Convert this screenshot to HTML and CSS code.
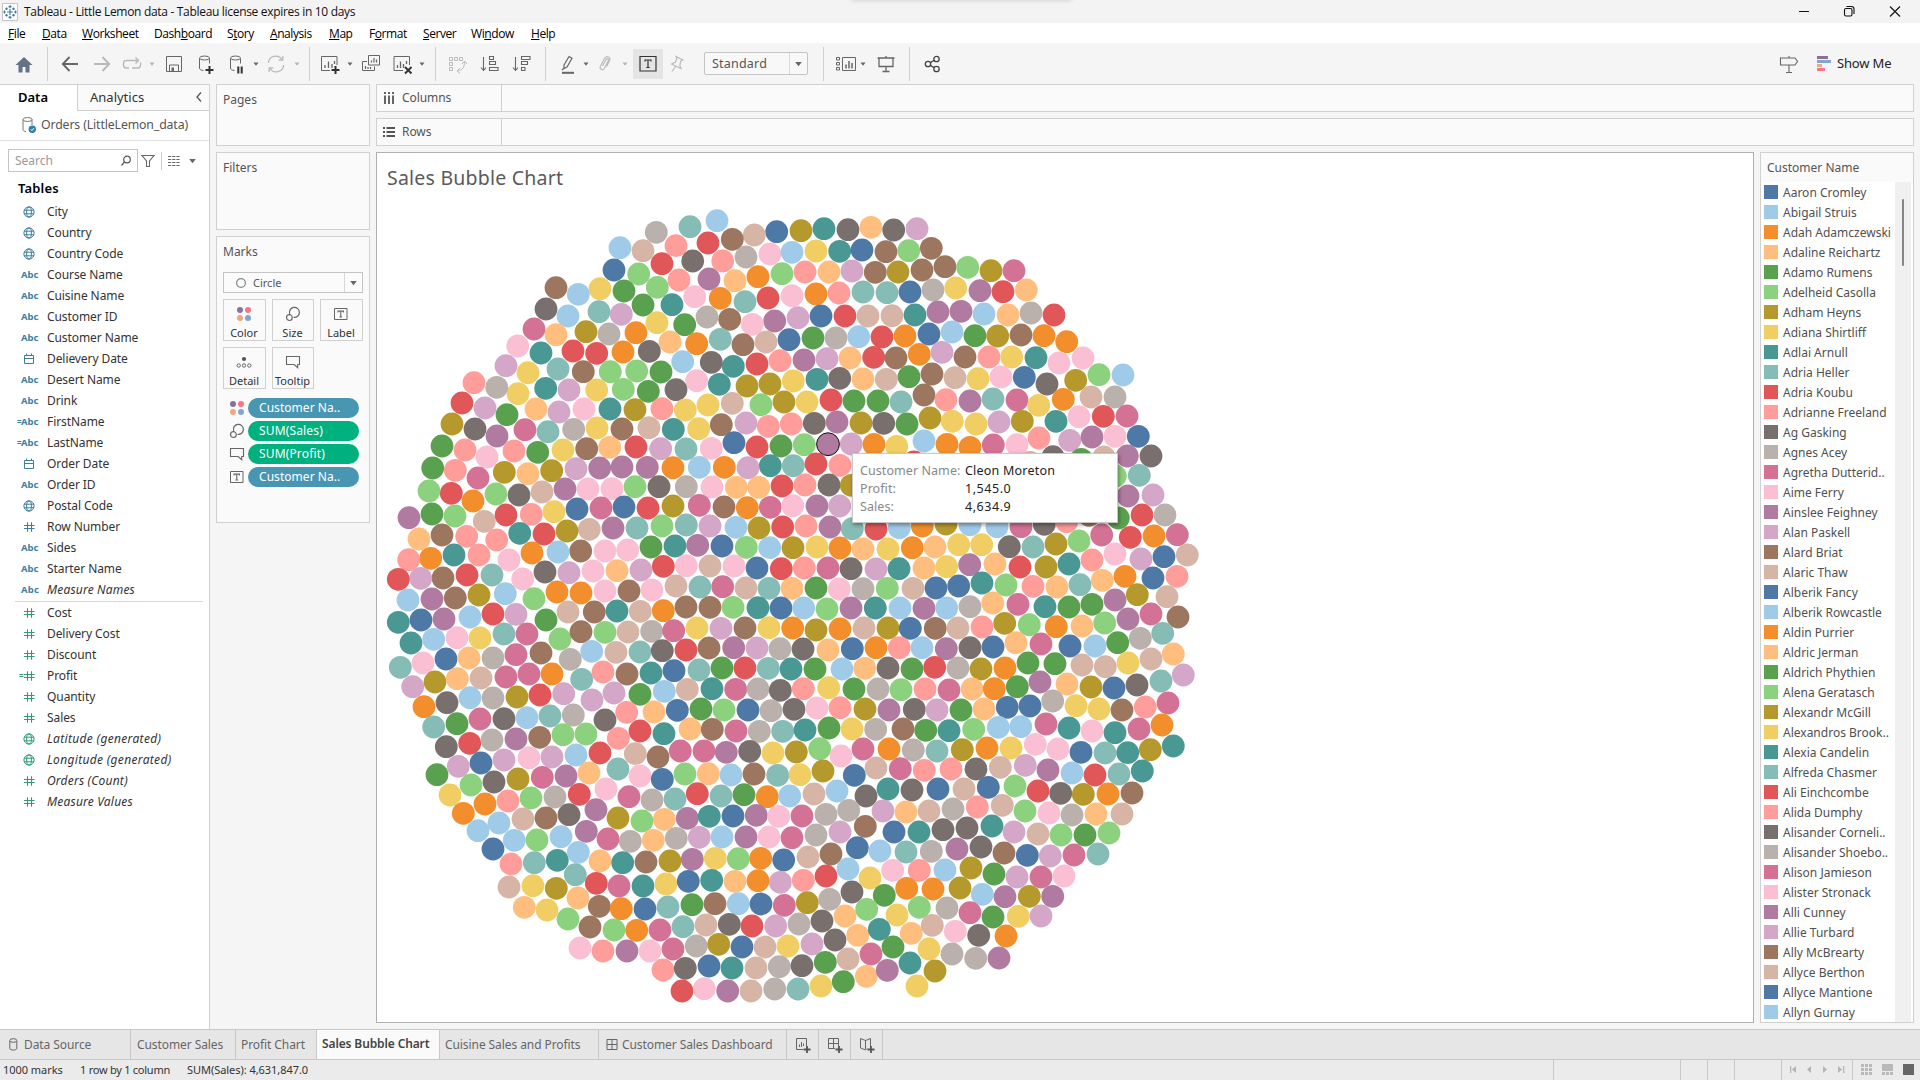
FILE: index.html
```html
<!DOCTYPE html>
<html lang="en">
<head>
<meta charset="utf-8">
<title>Tableau - Little Lemon data</title>
<link rel="stylesheet" href="styles.css">
</head>
<body>
<svg class="defs" width="0" height="0">
  <symbol id="globe" viewBox="0 0 14 14"><g fill="none" stroke="currentColor"><circle cx="7" cy="7" r="5.1"/><ellipse cx="7" cy="7" rx="2.4" ry="5.1"/><path d="M2 5.2h10M2 8.8h10"/></g></symbol>
  <symbol id="cal" viewBox="0 0 14 14"><path d="M2.5 3.5h9v8h-9zM2.5 6.5h9M4.5 1.5v2M9.500 1.500v2" fill="none" stroke="currentColor"/></symbol>
  <symbol id="hash" viewBox="0 0 14 14"><path d="M5.500 2.300v9.500M9.500 2.300v9.500M2 5.500h10.500M2 8.500h10.500" fill="none" stroke="currentColor" stroke-width="1.100"/></symbol>
  <symbol id="caret" viewBox="0 0 8 6"><path d="M1.500 1.500h5l-2.500 3.200z" fill="currentColor"/></symbol>
  <symbol id="colors" viewBox="0 0 16 16"><circle cx="4" cy="4" r="3" fill="#8b7198"/><circle cx="12" cy="4" r="3" fill="#fb7385"/><circle cx="4" cy="12" r="3" fill="#f1a77e"/><circle cx="12" cy="12" r="3" fill="#82a6cf"/></symbol>
  <symbol id="size" viewBox="0 0 16 16"><g fill="none" stroke="#666" stroke-width="1.200"><path d="M4.600 7.800A5 5 0 1 1 8.600 11.300"/><circle cx="4.400" cy="11.600" r="2.900"/></g></symbol>
  <symbol id="tbox" viewBox="0 0 16 16"><path d="M1.500 2.500h12.500v11h-12.500z" fill="none" stroke="#666"/><path d="M5 6.500v-1.400h5.500v1.400M7.750 5v6M6.400 11h2.700" fill="none" stroke="#666" stroke-width="1.100"/></symbol>
  <symbol id="tip" viewBox="0 0 16 16"><path d="M1.500 2.500h13v8h-1.800v3.200l-3.500-3.200H1.500z" fill="none" stroke="#666" stroke-width="1.100"/></symbol>
</svg>

<header class="titlebar">
  <svg class="logo" width="16" height="18" viewBox="0 0 16 18"><path fill="#fff" stroke="#c5c5c5" d="M.5.5h15v17H.5z"/><g stroke="#3f7da8" stroke-width="1.200"><path d="M8 6v6M5 9h6M8 2.200v3M6.500 3.700h3M8 12.800v3M6.500 14.300h3M2.500 7.500v3M1.200 9h2.600M13.500 7.500v3M12.200 9h2.600M4.500 4.500v2.600M3.200 5.800h2.600M11.500 4.500v2.600M10.200 5.800h2.600M4.500 11v2.600M3.200 12.300h2.600M11.500 11v2.600M10.200 12.300h2.600"/></g></svg>
  <span class="title">Tableau - Little Lemon data - Tableau license expires in 10 days</span>
  <i class="handle"></i>
  <svg class="win" width="112" height="20" viewBox="0 0 112 20" fill="none" stroke="#111" stroke-width="1.100"><path d="M1 9.500h10M92 4.500l10 10M102 4.500l-10 10"/><rect x="46.500" y="6.500" width="7.500" height="7.500" rx="1.500"/><path d="M48.500 4.500h5a2.500 2.500 0 0 1 2.500 2.500v5"/></svg>
</header>
<nav class="menu"><span><u>F</u>ile</span><span><u>D</u>ata</span><span><u>W</u>orksheet</span><span>Dash<u>b</u>oard</span><span>S<u>t</u>ory</span><span><u>A</u>nalysis</span><span><u>M</u>ap</span><span>F<u>o</u>rmat</span><span><u>S</u>erver</span><span>Wi<u>n</u>dow</span><span><u>H</u>elp</span></nav>

<div class="toolbar">
  <svg class="ic" viewBox="0 0 24 24"><path fill="#627287" d="M3.500 13 12 5l8.500 8h-3v7.500h-4V15h-3v5.500h-4V13z"/></svg>
  <i class="sep"></i>
  <svg class="ic" viewBox="0 0 24 24"><path d="M20 12H5M11.500 5 4.800 12l6.700 7" fill="none" stroke="#666" stroke-width="1.900"/></svg>
  <svg class="ic" viewBox="0 0 24 24"><path d="M4 12h15M12.500 5l6.700 7-6.700 7" fill="none" stroke="#b9b9b9" stroke-width="1.900"/></svg>
  <svg class="ic" viewBox="0 0 24 24"><path d="M9 16H6.500a3 3 0 0 1-3-3v-1.500a3 3 0 0 1 3-3H18M15.500 5.500l3 3-3 3M20.500 10.500V13a3 3 0 0 1-3 3H12" fill="none" stroke="#b9b9b9" stroke-width="1.400"/></svg>
  <svg class="car dim"><use href="#caret"/></svg>
  <svg class="ic" viewBox="0 0 24 24"><path d="M4.500 4.500h15v15h-15zM7.500 19v-6h9v6" fill="none" stroke="#666"/><path d="M9.500 15.500h2.500v4H9.500z" fill="#666"/></svg>
  <svg class="ic" viewBox="0 0 24 24"><path d="M5.500 6.500v9.500c0 1.500 1.500 2.300 4 2.500M15.500 6.500v5" fill="none" stroke="#666"/><ellipse cx="10.500" cy="6" rx="5" ry="2" fill="none" stroke="#666"/><path d="M15.500 14v8M11.500 18h8" stroke="#333" stroke-width="2"/></svg>
  <svg class="ic" viewBox="0 0 24 24"><path d="M5.500 6.500v9.500c0 1.500 1.500 2.300 4 2.500M15.500 6.500v5" fill="none" stroke="#666"/><ellipse cx="10.500" cy="6" rx="5" ry="2" fill="none" stroke="#666"/><path d="M13.300 14.500v7M16.700 14.500v7" stroke="#333" stroke-width="2"/></svg>
  <svg class="car"><use href="#caret"/></svg>
  <svg class="ic" viewBox="0 0 24 24"><path d="M4.300 11A7.500 7.500 0 0 1 18 7.500M18.800 4v4.200h-4.200M19.700 13A7.500 7.500 0 0 1 6 16.500M5.200 20v-4.200h4.200" fill="none" stroke="#b9b9b9" stroke-width="1.300"/></svg>
  <svg class="car dim"><use href="#caret"/></svg>
  <i class="sep"></i>
  <svg class="ic" viewBox="0 0 24 24"><path d="M12 18.500H3.500v-14h15.500v8.500" fill="none" stroke="#666"/><path d="M7 16v-3M10.500 16V9.500M14 16v-4M16.500 9v3" stroke="#666" stroke-width="1.300"/><path d="M17.500 14v8M13.500 18h8" stroke="#333" stroke-width="2"/></svg>
  <svg class="car"><use href="#caret"/></svg>
  <svg class="ic" viewBox="0 0 24 24"><path d="M8 9.500H3.500v9h12v-4M9.500 3.500h11v9.500h-11z" fill="none" stroke="#666"/><path d="M12.500 10.500v-2M15 10.500V6M17.500 10.500v-3M6.500 17v-3M9 17v-2M11.500 17v-2" stroke="#666" stroke-width="1.200"/></svg>
  <svg class="ic" viewBox="0 0 24 24"><path d="M12 18.500H3v-14h15.500v8.500" fill="none" stroke="#666"/><path d="M6.500 16v-3M9.500 16V9.500M12.500 16v-4M15.500 9v3" stroke="#666" stroke-width="1.300"/><path d="m14 15 6.500 6.500M20.500 15 14 21.500" stroke="#333" stroke-width="1.900"/></svg>
  <svg class="car"><use href="#caret"/></svg>
  <i class="sep"></i>
  <svg class="ic" viewBox="0 0 24 24"><path d="M4.500 5.500h3v3h-3zM9.500 5.500h3v3h-3zM14.500 5.500h3v3h-3zM4.500 10.500h3v3h-3zM4.500 15.500h3v3h-3zM19.500 9.500c0 6-2 8.500-7 9.500M17 12l2.500-3 2.500 3M15 16l-3 3 3 2.500" fill="none" stroke="#bbb"/></svg>
  <svg class="ic" viewBox="0 0 24 24"><path d="M5.500 5v13.500M3 15.500l2.500 3 2.500-3M11.500 4.500h4v3h-4zM11.500 9.500h6v3h-6zM11.500 15.500h8.500v3h-8.500z" fill="none" stroke="#666" stroke-width="1.100"/></svg>
  <svg class="ic" viewBox="0 0 24 24"><path d="M5.500 5v13.500M3 15.500l2.500 3 2.500-3M11.500 4.500H20v3h-8.500zM11.500 9.500h6v3h-6zM11.500 15.500h3.500v3h-3.500z" fill="none" stroke="#666" stroke-width="1.100"/></svg>
  <i class="sep"></i>
  <svg class="ic" viewBox="0 0 24 24"><path d="m8 13 5-8.500 3 1.700-5 8.800-3 1.500zM7.500 16.500l-1.500 1.500" fill="none" stroke="#666" stroke-width="1.200"/><path d="M6 20.800h12" stroke="#666" stroke-width="2"/></svg>
  <svg class="car"><use href="#caret"/></svg>
  <svg class="ic" viewBox="0 0 24 24"><path d="m9.500 14 3.500-6.500c1-1.500 3-.5 2.300 1.200l-4 7.800c-1.500 2.500-5 .8-4-2l4.300-8.200c2-3 6.400-1.200 5 2.200l-3 6" fill="none" stroke="#bbb" stroke-width="1.200"/></svg>
  <svg class="car dim"><use href="#caret"/></svg>
  <svg class="ic tool-on" viewBox="0 0 30 30"><path d="M7 7.500h16v14.500h-16z" fill="none" stroke="#333" stroke-width="1.200"/><path d="M12 12.500v-1.500h6v1.500M15 11v7.500M13.300 18.500h3.400" fill="none" stroke="#333" stroke-width="1.200"/></svg>
  <svg class="ic" viewBox="0 0 24 24"><path d="m11 4.500 7 3.500-2 .8-1.200 4.400 1.200 3.300-9.500-4.500 3.800-1.700 1.700-3.800zM10.500 14.500 7 19.500" fill="none" stroke="#bbb" stroke-width="1.200"/></svg>
  <div class="fit"><span>Standard</span><svg class="car"><use href="#caret"/></svg></div>
  <i class="sep"></i>
  <svg class="ic" viewBox="0 0 24 24"><path d="M2.500 5.500h3v2.500h-3zM2.500 10.500h3v2.500h-3zM2.500 15.500h3v2.500h-3zM8.500 5.500h13v13h-13z" fill="none" stroke="#666"/><path d="M12 16.500v-4M15 16.500V9M18 16.500v-5.500" stroke="#666" stroke-width="1.500"/></svg>
  <svg class="car"><use href="#caret"/></svg>
  <svg class="ic" viewBox="0 0 24 24"><path d="M3.500 6h17M5 6v8.500h14V6M12 14.500v5M8.500 19.500h7M12 4v2" fill="none" stroke="#666" stroke-width="1.300"/></svg>
  <i class="sep"></i>
  <svg class="ic" viewBox="0 0 24 24"><g fill="none" stroke="#444" stroke-width="1.300"><circle cx="8" cy="12" r="2.700"/><circle cx="16.500" cy="7" r="2.700"/><circle cx="16.500" cy="17" r="2.700"/><path d="m10.300 10.600 4-2.300M10.300 13.400l4 2.300"/></g></svg>
  <svg class="ic" viewBox="0 0 24 24"><path d="M3.500 6h14.500l2.500 3.500-2.500 3.500H3.500zM12 4v2M12 13v7.500M9 20.500h6" fill="none" stroke="#666" stroke-width="1.100"/></svg>
  <svg class="show" viewBox="0 0 18 20"><path fill="#8b7198" d="M2 2h11v3H2z"/><path fill="#82a6cf" d="M2 6h14v3H2z"/><path fill="#f1a77e" d="M2 10h5v3H2z"/><path fill="#fb7385" d="M2 14h8v3H2z"/></svg>
  <span class="showme">Show Me</span>
</div>

<main class="work">
  <aside class="data">
    <div class="dtabs"><b>Data</b><span>Analytics<svg width="8" height="12" viewBox="0 0 8 12"><path d="M6 1.500 2 6l4 4.500" fill="none" stroke="#555" stroke-width="1.300"/></svg></span></div>
    <div class="source"><svg width="16" height="18" viewBox="0 0 16 18"><g fill="none" stroke="#777"><ellipse cx="6.500" cy="3.500" rx="4.500" ry="2"/><path d="M2 3.500v10c0 1.300 1 1.800 3 2M11 3.500V9"/></g><circle cx="11.300" cy="13.300" r="3.700" fill="#357fa8"/><path d="m9.700 13.300 1.200 1.200 2-2.300" fill="none" stroke="#fff"/></svg><span>Orders (LittleLemon_data)</span></div>
    <div class="find">
      <div class="search"><span>Search</span><svg width="12" height="12" viewBox="0 0 12 12"><g fill="none" stroke="#555" stroke-width="1.200"><circle cx="7" cy="4.500" r="3.300"/><path d="M4.500 7 1.500 10.500"/></g></svg></div>
      <svg class="funnel" width="14" height="14" viewBox="0 0 14 14"><path d="M1 1.500h12L8.500 7v5.500h-3V7z" fill="none" stroke="#666" stroke-width="1.100"/></svg>
      <svg class="list" width="20" height="18" viewBox="0 0 20 18"><path d="M.5 0v18" stroke="#ccc"/><path d="M7 4.500h12M7 7.500h12M7 10.500h12M7 13.500h12" stroke="#666" stroke-width="1.200" stroke-dasharray="3.200 1"/></svg>
      <svg class="car big"><use href="#caret"/></svg>
    </div>
    <h2>Tables</h2>
    <ul class="fields">
      <li><svg><use href="#globe"/></svg>City</li>
      <li><svg><use href="#globe"/></svg>Country</li>
      <li><svg><use href="#globe"/></svg>Country Code</li>
      <li><em>Abc</em>Course Name</li>
      <li><em>Abc</em>Cuisine Name</li>
      <li><em>Abc</em>Customer ID</li>
      <li><em>Abc</em>Customer Name</li>
      <li><svg><use href="#cal"/></svg>Delievery Date</li>
      <li><em>Abc</em>Desert Name</li>
      <li><em>Abc</em>Drink</li>
      <li class="calc"><em>Abc</em>FirstName</li>
      <li class="calc"><em>Abc</em>LastName</li>
      <li><svg><use href="#cal"/></svg>Order Date</li>
      <li><em>Abc</em>Order ID</li>
      <li><svg><use href="#globe"/></svg>Postal Code</li>
      <li><svg><use href="#hash"/></svg>Row Number</li>
      <li><em>Abc</em>Sides</li>
      <li><em>Abc</em>Starter Name</li>
      <li class="gen"><em>Abc</em>Measure Names</li>
    </ul>
    <ul class="fields measures">
      <li><svg><use href="#hash"/></svg>Cost</li>
      <li><svg><use href="#hash"/></svg>Delivery Cost</li>
      <li><svg><use href="#hash"/></svg>Discount</li>
      <li class="calc"><svg><use href="#hash"/></svg>Profit</li>
      <li><svg><use href="#hash"/></svg>Quantity</li>
      <li><svg><use href="#hash"/></svg>Sales</li>
      <li class="gen"><svg><use href="#globe"/></svg>Latitude (generated)</li>
      <li class="gen"><svg><use href="#globe"/></svg>Longitude (generated)</li>
      <li class="gen"><svg><use href="#hash"/></svg>Orders (Count)</li>
      <li class="gen"><svg><use href="#hash"/></svg>Measure Values</li>
    </ul>
  </aside>

  <section class="cards">
    <div class="card pages">Pages</div>
    <div class="card filters">Filters</div>
    <div class="card marks">Marks
      <div class="type"><svg width="12" height="12" viewBox="0 0 12 12"><circle cx="6" cy="6" r="4.400" fill="none" stroke="#888" stroke-width="1.200"/></svg><span>Circle</span><svg class="car big"><use href="#caret"/></svg></div>
      <div class="btns">
        <div><svg><use href="#colors"/></svg>Color</div>
        <div><svg><use href="#size"/></svg>Size</div>
        <div><svg><use href="#tbox"/></svg>Label</div>
        <div><svg viewBox="0 0 16 16"><circle cx="8" cy="5" r="2.100" fill="#555"/><g fill="none" stroke="#666"><circle cx="2.700" cy="11.500" r="1.700"/><circle cx="8" cy="11.500" r="1.700"/><circle cx="13.300" cy="11.500" r="1.700"/></g></svg>Detail</div>
        <div><svg><use href="#tip"/></svg>Tooltip</div>
      </div>
      <div class="pills">
        <svg><use href="#colors"/></svg><span>Customer Na..</span>
        <svg><use href="#size"/></svg><span class="agg">SUM(Sales)</span>
        <svg><use href="#tip"/></svg><span class="agg">SUM(Profit)</span>
        <svg><use href="#tbox"/></svg><span>Customer Na..</span>
      </div>
    </div>
  </section>

  <section class="sheet">
    <div class="shelf"><div><svg width="12" height="14" viewBox="0 0 12 14"><path d="M2 1v2M2 4.500V13M6 1v2M6 4.500V13M10 1v2M10 4.500V13" stroke="#555" stroke-width="1.800"/></svg>Columns</div></div>
    <div class="shelf"><div><svg width="12" height="14" viewBox="0 0 12 14"><path d="M0 3h2M3.500 3H12M0 7h2M3.500 7H12M0 11h2M3.500 11H12" stroke="#555" stroke-width="1.800"/></svg>Rows</div></div>
    <div class="view">
      <div class="viz">
        <h1>Sales Bubble Chart</h1>
        <div class="plot">
          <svg id="bubbles" width="1376" height="822"></svg>
          <div class="tooltip"><span>Customer Name:</span><b>Cleon Moreton</b><span>Profit:</span><b>1,545.0</b><span>Sales:</span><b>4,634.9</b></div>
        </div>
      </div>
      <div class="legend">
        <h3>Customer Name</h3>
        <div class="lbody"><ul id="names"></ul><div class="track"><i></i></div></div>
      </div>
    </div>
  </section>
</main>

<footer class="tabs">
  <span class="ds"><svg width="9" height="13" viewBox="0 0 9 13"><path d="M.8 3v7.500c0 2 7 2 7 0V3" fill="none" stroke="#666"/><ellipse cx="4.300" cy="2.500" rx="3.500" ry="1.800" fill="none" stroke="#666"/></svg>Data Source</span>
  <span class="t2">Customer Sales</span>
  <span class="t3">Profit Chart</span>
  <span class="on">Sales Bubble Chart</span>
  <span class="t5">Cuisine Sales and Profits</span>
  <span class="t6"><svg width="12" height="13" viewBox="0 0 12 13"><path d="M1 1.500h10v10H1zM6 1.500v10M1 6.500h10" fill="none" stroke="#666"/></svg>Customer Sales Dashboard</span>
  <span class="add"><svg viewBox="0 0 16 16"><path d="M8 12.500H1.500v-11h10V9" fill="none" stroke="#666"/><path d="M4.500 10V7.500M6.500 10V5M8.500 9V6.500" stroke="#666"/><path d="M12 9v7M8.500 12.500h7" stroke="#555" stroke-width="1.800"/></svg></span>
  <span class="add"><svg viewBox="0 0 16 16"><path d="M8 11.500H1.500v-10h10V9M6.500 1.500v10M1.500 6.500h10" fill="none" stroke="#666"/><path d="M12 9v7M8.500 12.500h7" stroke="#555" stroke-width="1.800"/></svg></span>
  <span class="add"><svg viewBox="0 0 16 16"><path d="M8 11.500 6.500 13 1.500 11V1.500l5 2 5-2V9M6.500 3.500V12" fill="none" stroke="#666"/><path d="M12 9v7M8.500 12.500h7" stroke="#555" stroke-width="1.800"/></svg></span>
</footer>
<div class="status">
  <span>1000 marks</span><span class="rows">1 row by 1 column</span><span>SUM(Sales): 4,631,847.0</span>
  <i></i><i></i><i></i><i></i>
  <i class="nav"><svg width="71" height="20" viewBox="0 0 71 20" fill="#b5b5b5"><path d="M8 6h1.300v7H8zM14 6v7l-4-3.500zM29 6v7l-4-3.500zM41 6v7l4-3.500zM56 6v7l4-3.500zM61 6h1.300v7H61z"/></svg></i>
  <i class="modes"><svg width="68" height="20" viewBox="0 0 68 20" fill="#b9b9b9"><path d="M8 4h3v3H8zM12 4h3v3h-3zM16 4h3v3h-3zM8 8h3v3H8zM12 8h3v3h-3zM16 8h3v3h-3zM8 12h3v3H8zM12 12h3v3h-3zM16 12h3v3h-3zM29 4h11v7H29zM29 12h3v3h-3zM33 12h3v3h-3zM37 12h3v3h-3z"/><path fill="#666" d="M50 4h11v11H50z"/></svg></i>
</div>
<script src="chart.js"></script>
</body>
</html>
```
FILE: styles.css
```css
* { box-sizing: border-box; }
body { margin: 0; width: 1920px; height: 1080px; overflow: hidden; background: #f5f5f5; font-family: "Noto Sans", sans-serif; font-size: 12px; color: #333; display: flex; flex-direction: column; }
ul, h1, h2, h3 { margin: 0; padding: 0; list-style: none; font-weight: 400; }
svg { display: block; flex: none; }
.defs { position: absolute; }

.titlebar { height: 23px; background: #f3f3f3; display: flex; align-items: center; padding: 0 2px; flex: none; position: relative; font-family: "Open Sans", sans-serif; color: #111; }
.title { margin-left: 6px; letter-spacing: -0.31px; white-space: nowrap; }
.handle { position: absolute; left: 850px; top: -6px; width: 222px; height: 6px; border-radius: 4px; box-shadow: 0 0 5px rgba(0,0,0,.18); }
.win { margin-left: auto; margin-right: 8px; }
.menu { height: 20px; background: #fff; flex: none; display: grid; grid-template-columns: 34px 40px 72px 73px 43px 59px 40px 54px 48px 60px auto; padding-left: 8px; align-items: center; justify-content: start; font-family: "Open Sans", sans-serif; color: #000; letter-spacing: -0.42px; white-space: nowrap; }
.menu span { line-height: 18px; margin-top: 2px; }

.toolbar { height: 41px; flex: none; padding-left: 12px; display: grid; align-items: center; justify-items: start;
  grid-template-columns: 35px 11px 32px 30px 28px 14px 32px 31px 27px 12px 29px 16px 9px 28px 13px 32px 27px 17px 10px 33px 32px 35px 11px 26px 11px 28px 12px 32px 39px 119px 11px 25px 15px 35px 11px 857px 38px 22px 1fr; }
.ic { width: 24px; height: 24px; }
.tool-on { width: 30px; height: 30px; background: #e4e4e4; }
.sep { width: 1px; height: 34px; background: #d0d0d0; }
.car { width: 8px; height: 6px; color: #666; }
.car.big { width: 11px; height: 8px; }
.dim { color: #b5b5b5; }
.fit { width: 104px; height: 23px; border: 1px solid #c4c4c4; background: #f8f8f8; display: flex; align-items: center; color: #555; font-size: 12.5px; letter-spacing: 0.2px; border-radius: 2px; }
.fit span { flex: 1; padding-left: 7px; border-right: 1px solid #d8d8d8; line-height: 21px; }
.fit svg { width: 11px; height: 8px; margin: 0 3px; }
.show { width: 18px; height: 20px; }
.showme { font-size: 13px; color: #222; letter-spacing: -0.15px; margin-top: -1px; }

.work { height: 945px; flex: none; display: flex; }
.data { width: 210px; background: #fff; border: 1px solid #d0d0d0; border-width: 1px 1px 0 0; }
.dtabs { height: 26px; display: flex; font-size: 13px; color: #333; }
.dtabs b { width: 77px; padding-left: 18px; line-height: 24px; color: #000; font-weight: 600; }
.dtabs span { flex: 1; display: flex; justify-content: space-between; align-items: center; padding: 0 6px 2px 12px; background: #fafafa; border: 1px solid #d0d0d0; border-width: 0 0 1px 1px; }
.source { height: 30px; border-bottom: 1px solid #e0e0e0; display: flex; align-items: center; padding: 0 0 2px 21px; gap: 4px; color: #555; letter-spacing: -0.13px; font-size: 12.3px; white-space: nowrap; }
.find { display: flex; align-items: center; margin-top: 8px; height: 23px; padding-left: 8px; }
.search { width: 130px; height: 23px; border: 1px solid #c4c4c4; display: flex; align-items: center; justify-content: space-between; padding: 0 5px 0 6px; color: #999; }
.funnel { margin: 0 6px 0 3px; }
.list { margin-right: 6px; }
h2 { margin: 6px 0 3px 18px; font-size: 13px; font-weight: 600; line-height: 20px; color: #000; letter-spacing: 0.15px; }
.fields li { height: 21px; display: grid; grid-template-columns: 29px 1fr; align-items: center; padding-left: 18px; white-space: nowrap; color: #333; position: relative; letter-spacing: -0.08px; }
.fields li > svg { width: 14px; height: 14px; margin-left: 4px; color: #3d7f9f; }
.fields em { font: 700 9.500px "Noto Sans", sans-serif; color: #3d7f9f; padding-left: 3px; }
.calc::before { content: "="; position: absolute; left: 17px; top: 5px; font-size: 8px; font-weight: 700; line-height: 11px; color: #3d7f9f; }
.measures { margin: 1px 6px 0 15px; border-top: 1px solid #d8d8d8; }
.measures li { margin-left: -15px; }
.measures li > svg, .measures .calc::before { color: #2f9c74; }
.measures .calc::before { left: 19px; }
.fields .gen { font-style: italic; letter-spacing: 0.2px; }
.fields:not(.measures) .gen { letter-spacing: 0.18px; }
.measures .gen:nth-child(7), .measures .gen:nth-child(8) { letter-spacing: 0.33px; }

.cards { width: 154px; margin-left: 6px; }
.card { border: 1px solid #d0d0d0; background: #fafafa; margin-bottom: 6px; padding: 6px; line-height: 18px; color: #555; }
.pages { height: 62px; }
.filters { height: 78px; }
.marks { height: 287px; }
.type { margin-top: 11px; height: 21px; border: 1px solid #c4c4c4; display: flex; align-items: center; padding-left: 11px; font-size: 11px; background: #fbfbfb; }
.type span { flex: 1; padding-left: 6px; border-right: 1px solid #d8d8d8; line-height: 19px; }
.type .big { margin: 0 3px; }
.btns { display: grid; grid-template-columns: 43px 42px 43px; gap: 6px 6px; margin-top: 6px; }
.btns div { height: 42px; border: 1px solid #d0d0d0; display: flex; flex-direction: column; align-items: center; font-size: 11px; line-height: 14px; padding: 6px 1px 0 0; color: #333; gap: 4px; }
.btns svg { width: 16px; height: 16px; }
.pills { display: grid; grid-template-columns: 19px 111px; gap: 3px 0; padding-left: 6px; margin-top: 9px; align-items: center; }
.pills svg { width: 16px; height: 16px; }
.pills span { height: 20px; border-radius: 10px; background: #4996b2; color: #fff; padding-left: 11px; line-height: 20px; letter-spacing: 0.05px; }
.pills .agg { background: #00b180; letter-spacing: 0.15px; }

.sheet { margin-left: 6px; width: 1538px; }
.shelf { height: 28px; border: 1px solid #d0d0d0; background: #fafafa; margin-bottom: 6px; display: flex; }
.shelf div { width: 125px; border-right: 1px solid #d0d0d0; display: flex; align-items: center; gap: 7px; padding: 0 0 1px 6px; color: #555; letter-spacing: -0.08px; }
.view { display: flex; gap: 6px; }
.viz { width: 1378px; height: 871px; border: 1px solid #b0b0b0; background: #fff; }
h1 { height: 47px; padding: 11px 0 0 10px; font-size: 19.5px; line-height: 28px; color: #5a5a5a; letter-spacing: 0.22px; }
.plot { position: relative; height: 822px; }
.tooltip { position: absolute; left: 475px; top: 253px; width: 266px; height: 70px; background: #fff; border: 1px solid #c8c8c8; box-shadow: 1px 2px 4px rgba(0,0,0,.4); display: grid; grid-template-columns: 105px 1fr; grid-auto-rows: 18px; padding: 8px 7px; line-height: 18px; font-size: 12.5px; color: #888; white-space: nowrap; letter-spacing: 0.07px; }
.tooltip b { font-weight: 400; color: #222; letter-spacing: 0.22px; }
.tooltip b:nth-child(n+3) { letter-spacing: 0.55px; }
.legend { width: 154px; height: 871px; border: 1px solid #d0d0d0; background: #fff; }
.legend h3 { height: 29px; background: #fafafa; font-size: 12px; line-height: 30px; padding-left: 6px; color: #555; }
.lbody { display: flex; height: 840px; overflow: hidden; }
#names { width: 134px; }
#names li { height: 20px; display: flex; align-items: center; padding-left: 3px; gap: 5px; white-space: nowrap; color: #505050; }
#names i { width: 14px; height: 14px; flex: none; }
.track { width: 16px; background: #f0f0f0; padding: 17px 0 0 7px; }
.track i { display: block; width: 2px; height: 67px; background: #868686; border-radius: 1px; }

.tabs { height: 31px; flex: none; background: #e6e6e6; border: 1px solid #c8c8c8; border-width: 1px 0; display: flex; color: #666; white-space: nowrap; }
.tabs span { border-right: 1px solid #c8c8c8; display: flex; align-items: center; letter-spacing: -0.08px; padding-left: 5px; }
.tabs .ds { width: 131px; padding-left: 9px; gap: 6px; }
.tabs .t2 { width: 105px; padding-left: 6px; }
.tabs .t3 { width: 81px; }
.tabs .on { width: 123px; background: #fafafa; color: #444; font-weight: 600; padding-bottom: 2px; letter-spacing: -0.12px; }
.tabs .t5 { width: 159px; }
.tabs .t6 { width: 188px; padding-left: 7px; gap: 4px; }
.tabs .add { width: 32px; padding-left: 8px; }
.add svg { width: 16px; height: 16px; }
.status { height: 20px; background: #ebebeb; display: grid; grid-template-columns: 77px 107px 1366px 127px 27px 27px 47px 71px 1fr; padding-left: 3px; font-size: 11px; line-height: 20px; white-space: nowrap; letter-spacing: -0.05px; }
.status .rows { letter-spacing: -0.25px; }
.status i { border-left: 1px solid #c8c8c8; }
```
FILE: chart.js
```js
const NS = 'http://www.w3.org/2000/svg';
const palette = {
  b: '#4e79a7', l: '#a0cbe8', o: '#f28e2b', p: '#ffbe7d', g: '#59a14f', h: '#8cd17d', y: '#b6992d',
  w: '#f1ce63', t: '#499894', u: '#86bcb6', r: '#e15759', s: '#ff9d9a', k: '#79706e', a: '#bab0ac',
  m: '#d37295', i: '#fabfd2', v: '#b07aa1', c: '#d4a6c8', n: '#9d7660', e: '#d7b5a6'
};

// Each mark is a colour key followed by its centre, in thirds of a pixel from the group's origin.
const groups = [
  { x: 3, y: 0, marks: `l1011,62 u930,80 a829,97 b1190,95 e1123,105 n1057,118 r984,129 s888,137 l720,143 e789,152
i1170,162 a1098,171 s1028,183 k938,183 r846,191 b702,210 h776,222 h1206,221 o1134,230 p1065,242 v987,237 s897,240 h832,262 g732,273 w660,266 l595,283 n528,263
r1164,294 u1095,305 o1021,295 i944,290 t876,314 g789,315 c724,343 u657,335 l564,348 k498,327 v1184,363 i1117,373 n1049,358 a981,351 g914,374 w831,368 o768,398 a687,402 y618,395 p528,404 m462,387
b1227,419 e1158,426 n1089,434 u1021,418 o950,431 p870,426 k808,454 o729,456 r650,460 r579,453 t483,459 i413,438 s1200,482 r1131,492 t1060,499 k994,487 l908,485 g843,516 h770,513 h691,515 n610,515 u534,507 w444,518 c378,497
y1170,552 y1101,558 t1018,553 i950,542 k888,569 g805,574 h730,568 w650,570 c567,570 t497,565 w414,581 a350,562 s282,548 y1212,606 h1143,614 e1057,610 w984,615 w916,630 s846,626 y765,629 t690,627 i612,627 c537,636 p468,627 g381,644 c315,624 r246,609
s1165,679 c1098,669 n1024,674 w956,686 t880,688 e807,683 n726,687 w651,684 a581,688 u504,695 m435,689 v351,708 k285,687 y216,672 g1203,738 r1131,741 b1062,728 i994,745 u918,747 c842,746 r768,741 p689,742 n620,746 w549,750 g473,757 s402,753 i321,771 s255,750 g186,738
t1171,797 c1104,803 o1033,802 l958,802 o879,803 v802,802 v726,801 v659,804 c588,806 y515,812 p444,821 y373,817 m294,834 s226,811 g158,804 r1206,858 p1136,862 p1069,862 i996,861 a919,860 k837,860 h765,860 i696,866 i624,867 v555,867 e486,876 k417,885 h348,882 o279,903 r214,880 h147,873
m1171,922 o1102,923 n1032,921 m958,916 y879,918 r804,924 b732,921 m663,924 b591,927 w522,935 s454,943 r378,945 e313,964 h225,948 g156,942 v87,953 r1208,981 y1137,984 l1068,982 c990,978 u919,975 h846,978 u771,984 v699,984 e628,988 y561,993 r492,1002 t419,1000 s350,1020 s260,1009 n186,1005 p117,1017
l1169,1043 h1099,1042 b1026,1038 v953,1036 t885,1038 g813,1041 i743,1050 i675,1053 n602,1053 l534,1056 o456,1059 i387,1080 s297,1065 t222,1065 o152,1075 s86,1079 r1204,1106 b1131,1104 i1062,1098 e990,1098 i919,1097 r850,1099 c783,1110 p711,1112 i639,1113 c567,1118 k495,1116 i428,1137 u336,1125 r261,1125 n189,1134 c122,1135 r55,1138
u1167,1165 e1098,1164 m1028,1160 u960,1161 e888,1158 i816,1170 n747,1173 i675,1173 o603,1179 o531,1176 h462,1196 l376,1181 y297,1185 n226,1194 v156,1197 l84,1200` },
  { x: 413, y: 0, marks: `y33,92 t102,86 k174,89 p243,82 k311,90 c381,86 l6,157 w78,153 t149,154 b216,150 n288,155 h356,152 n424,145
s45,216 p117,216 c186,213 n256,217 y324,216 n396,210 n465,200 h533,202 y603,212 m672,212 i6,287 o78,282 s147,279 u219,276 u291,278 b360,276 a429,270 w497,264 v570,272 r639,275 p709,270
c24,353 b93,348 r165,348 e234,348 e306,347 t375,345 v444,336 v513,334 l582,342 p654,345 a723,339 r792,345 g69,414 a138,414 l206,410 r276,411 o345,408 b417,402 l486,396 g555,407 y623,408 n693,405 o762,407 o830,425
v42,480 c111,476 p180,474 r251,472 n318,474 o388,463 c456,457 n525,471 s597,471 w665,471 t738,473 i807,489 i879,474 w10,543 t81,538 k149,535 p219,537 e289,538 g357,530 n426,522 e495,533 w564,536 i633,531 b703,532 k771,552 y857,541 h927,524 l999,525
w51,606 r123,600 g192,603 g264,603 u333,606 n402,585 s468,599 v540,603 u609,597 m681,600 w746,616 o820,598 e903,591 a975,591 s4,672 k73,670 v141,666 y213,669 k281,670 g351,672 y420,654 w487,664 w558,672 c627,666 y697,664 t798,664 i867,650 r940,649 m1011,648
h43,734 c184,732 o252,733 w320,739 l402,723 o471,733 o540,742 m610,735 i681,734 s747,714 c839,721 v906,711 i975,709 b1045,709 u10,797 r78,792 s150,796 r372,786 k789,770 e720,787 g874,778 e942,771 v1012,768 k1083,768
s45,855 k117,855 y184,856 h976,828 u1048,826 i8,917 v81,918 c149,918 v1014,888 c1089,885 s48,978 v120,981 u187,986 r258,987 l328,983 o397,978 y468,972 l540,974 l621,980 m693,980 k763,973 s830,965 n897,946 g985,954 r1056,945 a1125,945
y9,1043 w81,1041 o150,1044 p219,1047 w294,1047 o367,1043 p435,1041 w506,1034 w575,1034 k658,1040 u729,1041 y798,1032 h867,1023 m935,1005 r1021,1012 o1092,1008 m1162,1004 s43,1104 m114,1104 k183,1106 c258,1107 t327,1106 p402,1104 w470,1100 v539,1094 p615,1092 r690,1101 y768,1101 t837,1092 s906,1080 i975,1062 c1053,1077 b1122,1070 e1192,1065
p6,1165 g78,1164 i148,1167 a219,1166 h292,1165 e369,1165 b438,1164 b506,1158 t576,1149 h648,1155 s729,1159 p801,1161 u870,1154 p937,1141 o1005,1129 b1089,1134 s1161,1129 v975,1200 y1042,1184 e1131,1190` },
  { x: 3, y: 400, marks: `t55,67 b123,60 v192,57 l270,51 r339,42 c408,43 g498,60 e564,36 n643,36 t711,33 e781,34 o850,32 n918,21 n990,22 h1059,22 t1134,23 b1203,24
t93,129 l161,118 i231,113 w300,114 u372,102 m441,102 h540,117 n603,95 h675,97 e744,96 a815,94 m881,92 w951,84 c1023,85 n1095,84 w1167,83 u61,202 i129,189 b198,177 p267,174 a339,174 m408,164 n483,159 a571,178 l635,154 e708,157 u780,156 k847,152 r918,150 n987,144 v1061,143 c1131,144 a1200,146
c98,260 y165,246 p232,236 e303,234 m378,231 m447,222 o516,222 u605,238 s669,216 n741,222 t813,219 b882,212 u957,210 g1026,204 r1095,204 u1165,205 o132,320 k201,308 l270,293 a339,294 y411,291 r480,285 c551,281 c636,300 c702,279 g780,283 l853,274 e922,268 t996,266 m1067,268 a1134,267 k1201,271
u161,381 g231,371 m300,357 k372,356 l441,353 u510,348 a580,345 k675,360 s740,337 p822,336 b892,331 g963,327 h1032,330 b1104,330 a1173,332 k199,440 r269,430 a336,420 v408,417 n479,412 h549,404 h618,402 s715,415 r780,393 t852,401 p930,387 n997,388 m1068,393 a1138,394 u1208,394
g171,524 c235,499 b303,489 c372,480 i447,473 c516,471 l588,465 r660,459 e766,461 n834,471 m901,453 m972,453 v1039,457 k1109,454 w1179,459 w210,585 h273,555 k342,546 y414,537 m487,532 v558,528 p627,519 u714,507 i780,528 b847,538 h915,522 p985,521 l1053,525 n1122,522 u1193,526
o250,640 o315,612 s384,603 h453,594 a525,591 r598,583 i678,567 m747,590 a816,600 u885,597 r952,581 u1023,588 g1092,584 o1162,590 l1229,588 l294,692 l357,669 e429,657 n498,654 k567,644 v648,629 y714,654 h786,663 p853,658 v922,655 t988,649 b1059,648 v1129,646 i1196,649
b339,747 l403,721 h471,720 l543,710 v619,694 m684,717 a751,724 p820,721 a889,715 c958,712 l1026,711 v1098,711 i1167,711 s393,792 u463,788 t532,781 l595,757 p660,783 t728,788 n798,786 y870,783 v937,778 w1006,775 h1075,776 o1142,775 b1211,780
e387,861 w459,857 y529,865 u586,824 r649,850 m717,858 t789,858 w858,852 b925,844 t995,841 p1065,844 o1134,842 c1201,847 p433,922 w501,930 p594,894 n658,919 o724,926 b795,927 u864,921 g936,914 n1005,911 l1075,911 b1143,912 m1213,916
h564,957 n630,981 h702,990 o770,991 m840,990 u909,980 e978,975 k1048,973 r1116,978 c1187,978 i600,1044 s669,1053 v741,1053 i810,1053 m879,1047 a949,1038 y1016,1033 b1086,1041 e1155,1041 w1224,1038
s849,1110 k916,1105 b987,1098 t1056,1104 e1128,1104 a1198,1100 r906,1173 i973,1166 v1043,1173 e1113,1173 a1184,1167` },
  { x: 413, y: 400, marks: `l41,24 h111,27 v183,24 t256,24 l330,24 v402,25 l470,24 a540,20 p608,9 m684,13 t765,20 g837,21 g906,13 v1014,57 m1083,42 n1164,51
o8,84 y78,90 o150,87 e222,84 y294,84 b361,85 n436,85 e504,84 s576,81 y644,70 h718,74 o799,80 p876,78 h944,69 a1051,115 u1118,100 k39,147 p114,150 b187,146 o258,143 s328,143 l396,143 v469,146 k540,143 b609,141 p678,128 m753,132 b840,138 l915,138 g983,128 e1083,177 p1150,162
t3,207 g75,207 l156,207 p224,205 k294,204 g366,207 r434,202 a504,204 y573,207 o645,204 g714,189 g795,191 e876,195 e946,200 w1014,189 u1113,243 c1180,225 s40,266 w116,263 g192,267 a264,267 h333,269 s405,267 m477,270 p546,267 o613,266 g682,260 v750,246 p831,252 y903,261 b972,264 k1041,255 m1134,309
k12,328 i81,324 s150,323 y225,327 v297,330 k373,328 c441,330 g513,330 p582,327 b652,322 b720,318 a788,303 w858,317 w927,327 n996,330 s1066,321 t45,390 g117,384 w186,387 a257,388 n339,387 g407,391 t477,392 h551,388 l625,382 l692,380 m768,372 t837,384 i906,393 t975,398 m1047,387 o1116,375
y19,456 h89,446 i153,468 m219,447 o297,447 a370,450 u441,453 y517,449 o591,444 w663,444 i736,433 i804,447 b873,457 u945,459 t1013,458 y1081,449 t1150,438 w30,524 y99,513 b193,526 e258,504 m331,506 s403,511 s483,507 k558,507 e631,502 c706,496 v774,510 l846,519 r915,525 u987,522 t1057,513
e72,582 l141,573 k228,588 t294,567 k366,570 b444,567 e522,567 b595,562 h675,558 r744,573 k812,580 y880,583 o954,582 n1026,579 m36,648 a108,643 a176,631 c279,633 p348,636 e417,633 a489,627 s562,621 e637,616 h705,633 i777,639 a846,645 p918,642 e996,642
m6,713 a78,705 c150,696 n226,679 b312,696 t387,696 k459,689 k531,684 t606,678 c672,696 e744,702 h813,705 g885,705 h957,699 e54,771 n123,762 b202,743 l270,753 u348,756 a424,754 v501,747 k573,741 n642,759 b712,766 c781,768 m852,765 u924,762
s40,841 r108,828 l174,807 w240,834 i308,811 s388,811 l465,810 y543,804 g612,822 c681,831 m753,831 i822,828 y52,908 a119,898 k186,876 g283,886 o350,865 o429,867 y510,864 l577,883 v645,890 y718,889 v788,889
a27,972 k96,963 p165,948 h230,928 w321,945 h388,922 a471,924 m540,938 g609,951 w685,949 c753,948 c66,1032 k135,1020 p203,1006 t268,988 p364,1000 e427,976 i496,994 k566,1006 o648,1008
k36,1097 g106,1087 e174,1077 m243,1062 g309,1041 t360,1089 w417,1047 a486,1062 a557,1075 v627,1074 u24,1167 w93,1158 g160,1145 p229,1129 v292,1111 w381,1158 y435,1113` }
];

const svg = document.getElementById('bubbles');
function circle(x, y, fill) {
  const c = document.createElementNS(NS, 'circle');
  c.setAttribute('cx', x.toFixed(1));
  c.setAttribute('cy', y.toFixed(1));
  c.setAttribute('r', 11.4);
  c.setAttribute('fill', fill);
  svg.appendChild(c);
  return c;
}
for (const g of groups) {
  for (const mark of g.marks.split(/\s+/)) {
    const [x, y] = mark.slice(1).split(',').map(Number);
    circle(g.x + x / 3, g.y + y / 3, palette[mark[0]]);
  }
}
const selected = circle(451, 244.2, palette.v);
selected.setAttribute('stroke', '#111');

const names = ['Aaron Cromley', 'Abigail Struis', 'Adah Adamczewski', 'Adaline Reichartz', 'Adamo Rumens', 'Adelheid Casolla',
  'Adham Heyns', 'Adiana Shirtliff', 'Adlai Arnull', 'Adria Heller', 'Adria Koubu', 'Adrianne Freeland', 'Ag Gasking', 'Agnes Acey',
  'Agretha Dutterid..', 'Aime Ferry', 'Ainslee Feighney', 'Alan Paskell', 'Alard Briat', 'Alaric Thaw', 'Alberik Fancy',
  'Alberik Rowcastle', 'Aldin Purrier', 'Aldric Jerman', 'Aldrich Phythien', 'Alena Geratasch', 'Alexandr McGill',
  'Alexandros Brook..', 'Alexia Candelin', 'Alfreda Chasmer', 'Ali Einchcombe', 'Alida Dumphy', 'Alisander Corneli..',
  'Alisander Shoebo..', 'Alison Jamieson', 'Alister Stronack', 'Alli Cunney', 'Allie Turbard', 'Ally McBrearty', 'Allyce Berthon',
  'Allyce Mantione', 'Allyn Gurnay'];
const colors = Object.values(palette);
const list = document.getElementById('names');
names.forEach((name, n) => {
  const li = document.createElement('li');
  const swatch = document.createElement('i');
  swatch.style.background = colors[n % colors.length];
  li.append(swatch, name);
  list.appendChild(li);
});
```
